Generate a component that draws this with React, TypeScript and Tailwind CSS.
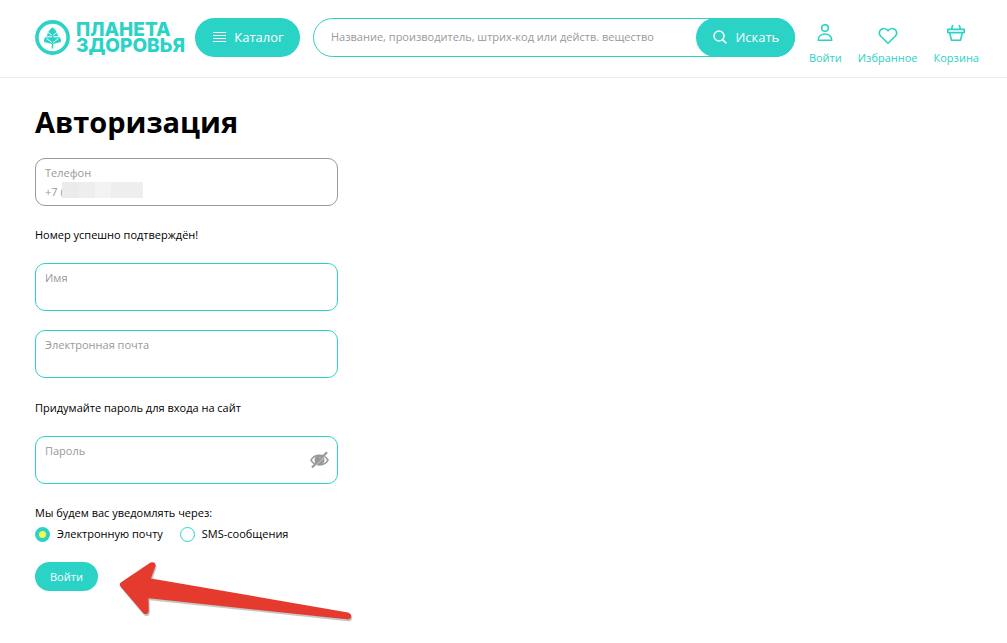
import { useId, useState } from 'react';
import type { ReactNode } from 'react';

const Logo = () => (
  <a href="/" className="flex w-[148px] shrink-0 items-center gap-1.5 text-[#2bd2c6]">
    <svg width="35" height="35" viewBox="0 0 35 35" fill="none" stroke="currentColor" className="shrink-0" aria-hidden="true">
      <circle cx="17.5" cy="17.5" r="15.6" strokeWidth="3.6" />
      <path
        d="M17.5 7.2C15 9.8 12.6 11.4 12.2 15.2 9.8 16.6 8.8 18.6 9 22c3 .3 5 2 8.5 1.800 3.500.2 5.500-1.500 8.500-1.800.2-3.400-.8-5.400-3.200-6.800-.4-3.800-2.800-5.400-5.300-8z"
        fill="currentColor"
        stroke="none"
      />
      <path d="M9 16.800h17M17 15.300l-4.500-3.300M18 15.300l4.500-3.300M17 22.500l-5.500-4M18 22.500l5.500-4" stroke="#fff" strokeWidth="1" />
      <path d="M17.500 8V28.500" strokeWidth="1.500" />
    </svg>
    <span className="font-['Inter',sans-serif] text-[19px] leading-4 font-extrabold">
      ПЛАНЕТА
      <br />
      ЗДОРОВЬЯ
    </span>
  </a>
);

const NavLink = ({ href, title, children }: { href: string; title: string; children: ReactNode }) => (
  <a href={href} className="flex flex-col items-center gap-1 text-[11px] leading-4 text-[#2bd2c6]">
    <svg
      width="22"
      height="22"
      viewBox="0 0 22 22"
      fill="none"
      stroke="currentColor"
      strokeWidth="1.6"
      strokeLinejoin="round"
      aria-hidden="true"
    >
      {children}
    </svg>
    {title}
  </a>
);

const Header = () => (
  <header className="flex items-start border-b border-[#ebebeb] pt-[18px] pr-7 pb-[11px] pl-[35px]">
    <div className="flex h-[39px] items-center">
      <Logo />
    </div>
    <button
      type="button"
      className="ml-3 flex h-[39px] w-[105px] shrink-0 items-center justify-center gap-2 rounded-full bg-[#2bd2c6] pb-0.5 pl-0.5 text-[13px] text-white"
    >
      <svg width="13" height="10" viewBox="0 0 13 10" stroke="currentColor" strokeWidth="1" aria-hidden="true">
        <path d="M0 .5h13M0 3.5h13M0 6.5h13M0 9.5h13" />
      </svg>
      Каталог
    </button>
    <form
      role="search"
      onSubmit={(e) => e.preventDefault()}
      className="ml-[13px] flex h-[39px] min-w-0 flex-1 rounded-full border border-[#2bd2c6]"
    >
      <input
        type="search"
        aria-label="Поиск"
        placeholder="Название, производитель, штрих-код или действ. вещество"
        className="min-w-0 flex-1 bg-transparent pb-0.5 pl-[17px] text-[11px] outline-none placeholder:text-[#999]"
      />
      <button
        type="submit"
        className="-m-px flex w-[99px] shrink-0 items-center justify-center gap-2 rounded-full bg-[#2bd2c6] pb-0.5 pl-0.5 text-[13px] text-white"
      >
        <svg width="14" height="14" viewBox="0 0 14 14" fill="none" stroke="currentColor" strokeWidth="1.5" aria-hidden="true">
          <circle cx="6" cy="6" r="5" />
          <path d="m9.6 9.6 3.8 3.8" />
        </svg>
        Искать
      </button>
    </form>
    <nav className="ml-3.5 flex shrink-0 gap-4 pt-1.5">
      <NavLink href="/login" title="Войти">
        <circle cx="11" cy="4" r="3.3" />
        <path d="M4.2 16.3c0-8.4 13.6-8.4 13.6 0z" />
      </NavLink>
      <NavLink href="/favorites" title="Избранное">
        <path d="M11 19.3 3.6 12C-.5 7.4 6.2 1.4 11 6.8c4.8-5.4 11.5.6 7.4 5.2z" />
      </NavLink>
      <NavLink href="/cart" title="Корзина">
        <path d="M2.8 5.4h16.4v3.2H2.8zM4.6 8.6l1.9 7.7h9l1.9-7.7M7.8 1 6.5 5M14.2 1l1.3 4" />
      </NavLink>
    </nav>
  </header>
);

interface FieldProps {
  label: string;
  type: string;
  value?: string;
  readOnly?: boolean;
  mask?: ReactNode;
  children?: ReactNode;
}

const Field = ({ label, type, value = '', readOnly = false, mask, children }: FieldProps) => {
  const id = useId();

  return (
    <div
      className={`flex h-12 items-center rounded-[10px] border pr-2 pl-[9px] text-[#999] ${
        readOnly ? 'border-[#999]' : 'border-[#2bd2c6]'
      }`}
    >
      <div className="relative flex min-w-0 flex-1 flex-col pt-0.5">
        <label htmlFor={id} className="text-[11px] leading-4">
          {label}
        </label>
        <input
          id={id}
          type={type}
          defaultValue={value}
          readOnly={readOnly}
          className="h-5 w-full bg-transparent text-[11px] outline-none"
        />
        {mask}
      </div>
      {children}
    </div>
  );
};

const PhoneMask = () => (
  <span className="absolute bottom-[3px] left-[17px] flex h-4" aria-hidden="true">
    <span className="w-[17px] bg-[#eaecec]" />
    <span className="w-4 bg-[#eeeeec]" />
    <span className="w-4 bg-[#f3f3f3]" />
    <span className="w-8 bg-[#eeeeee]" />
  </span>
);

const Channel = ({ title, checked, onSelect }: { title: string; checked: boolean; onSelect: () => void }) => (
  <label className="flex items-center gap-[7px]">
    <input
      type="radio"
      name="channel"
      checked={checked}
      onChange={onSelect}
      className="size-[15px] appearance-none rounded-full border border-[#2bd2c6] checked:border-4 checked:bg-[#f9f651]"
    />
    {title}
  </label>
);

// Points at the submit button
const Arrow = () => (
  <svg className="absolute top-0 left-[84px]" width="236" height="62" viewBox="0 0 236 62" aria-hidden="true">
    <path
      d="M1.8 20.4 31.5.5Q37-1 36.5 4L32 16.5 229 50.5Q233 52 232 55.5 231 58 227.5 57.3L29.5 36.2 29.8 49Q28.5 54 24.5 51.5L1.5 24.5Q0 22 1.8 20.4Z"
      fill="#000"
      opacity="0.22"
      transform="translate(1 2)"
    />
    <path
      d="M1.8 20.4 31.5.5Q37-1 36.5 4L32 16.5 229 50.5Q233 52 232 55.5 231 58 227.5 57.3L29.5 36.2 29.8 49Q28.5 54 24.5 51.5L1.5 24.5Q0 22 1.8 20.4Z"
      fill="#e53b2f"
    />
  </svg>
);

export default function App() {
  const [channel, setChannel] = useState('email');

  return (
    <div className="min-h-screen bg-white font-['Open_Sans',sans-serif] text-[11px] leading-4 text-black">
      <Header />
      <main className="px-[35px] pt-6 pb-6">
        <h1 className="text-[29px] leading-10 font-bold">Авторизация</h1>
        <form onSubmit={(e) => e.preventDefault()} className="mt-4 flex w-full max-w-[303px] flex-col">
          <Field label="Телефон" type="tel" value="+7 (" readOnly mask={<PhoneMask />} />
          <p className="mt-[21px] mb-5">Номер успешно подтверждён!</p>
          <div className="flex flex-col gap-[19px]">
            <Field label="Имя" type="text" />
            <Field label="Электронная почта" type="email" />
          </div>
          <p className="mt-[22px] mb-5">Придумайте пароль для входа на сайт</p>
          <Field label="Пароль" type="password">
            <button type="button" aria-label="Показать пароль">
              <svg width="19" height="18" viewBox="0 0 19 18" fill="none" stroke="#999" aria-hidden="true">
                <path d="M1 9.2C4.5 2.5 14.5 2.5 18 9.2 14.5 15.5 4.5 15.5 1 9.2Z" strokeWidth="1.6" />
                <circle cx="9.5" cy="9" r="5" fill="#999" stroke="none" />
                <path d="M9.5 6.8q2-.6 2.7 1.4" stroke="#fff" />
                <path d="M3.3 17.2 18 2.2" stroke="#fff" strokeWidth="0.7" />
                <path d="M2 16.6 17 1.2" strokeWidth="2.2" />
              </svg>
            </button>
          </Field>
          <fieldset className="mt-[21px]">
            <legend>Мы будем вас уведомлять через:</legend>
            <div className="mt-[5px] flex gap-[17px]">
              <Channel title="Электронную почту" checked={channel === 'email'} onSelect={() => setChannel('email')} />
              <Channel title="SMS-сообщения" checked={channel === 'sms'} onSelect={() => setChannel('sms')} />
            </div>
          </fieldset>
          <div className="relative mt-5 flex">
            <button type="submit" className="h-[29px] rounded-full bg-[#2bd2c6] px-[15px] text-white">
              Войти
            </button>
            <Arrow />
          </div>
        </form>
      </main>
    </div>
  );
}
